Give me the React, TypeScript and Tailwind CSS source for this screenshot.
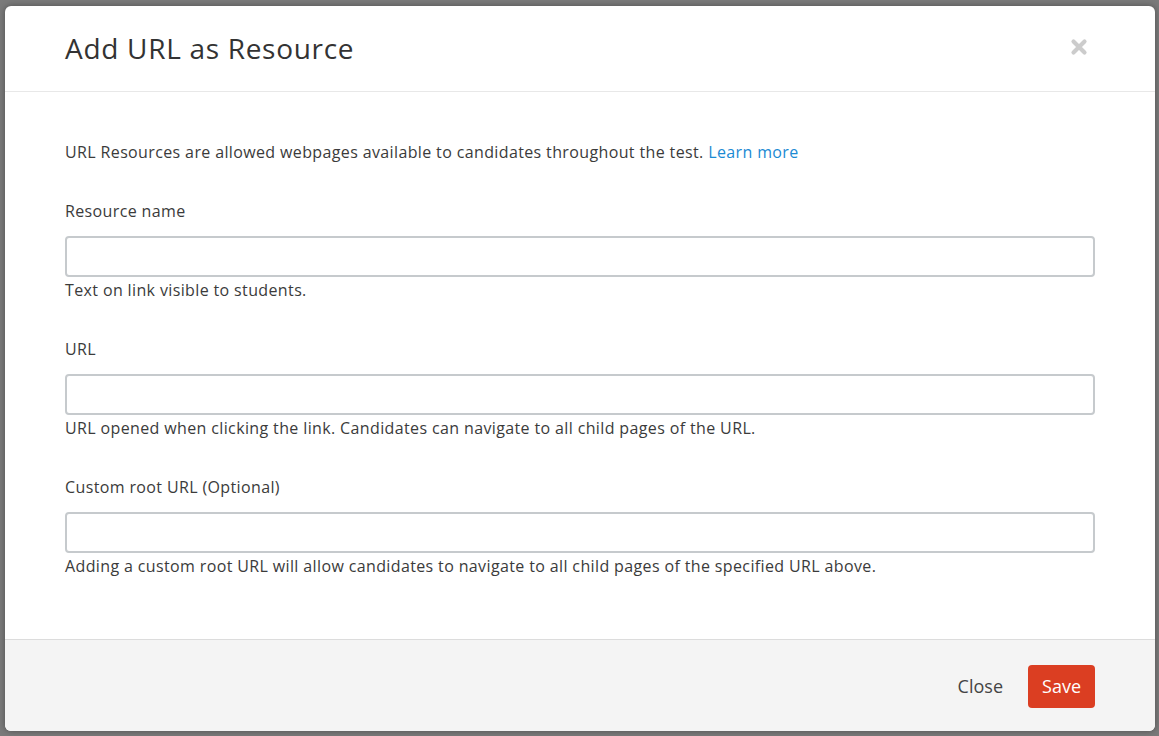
import React from 'react';

const fields = [
  { label: 'Resource name', help: 'Text on link visible to students.' },
  { label: 'URL', help: 'URL opened when clicking the link. Candidates can navigate to all child pages of the URL.' },
  {
    label: 'Custom root URL (Optional)',
    help: 'Adding a custom root URL will allow candidates to navigate to all child pages of the specified URL above.',
  },
];

// bold "times" glyph for the dismiss button
const CloseIcon = () => (
  <svg width="18" height="18" viewBox="0 0 18 18" fill="none">
    <path d="M3.5 3.5 L14.5 14.5 M14.5 3.5 L3.5 14.5" stroke="currentColor" strokeWidth="4.2" strokeLinecap="round" />
  </svg>
);

const App: React.FC = () => {
  return (
    <div
      className="h-[736px] w-full bg-[#7a7a7a] pt-[6px] pb-[5px] pl-[5px] pr-[4px] overflow-hidden"
      style={{ fontFamily: '"Open Sans", "Liberation Sans", sans-serif' }}
    >
      <div className="h-full flex flex-col bg-white rounded-[6px] shadow-[0_0_6px_rgba(0,0,0,0.35)] overflow-hidden text-[#3b3b3b]">
        {/* Header */}
        <div className="h-[86px] shrink-0 flex items-center justify-between pl-[60px] pr-[67px] border-b border-[#e8e8e8]">
          <h2 className="text-[28px] leading-none font-normal tracking-[0.7px] text-[#333] -mt-[2px]">Add URL as Resource</h2>
          <button className="text-[#cccccc] -mt-[4px]">
            <CloseIcon />
          </button>
        </div>

        {/* Body */}
        <div className="flex-1 px-[60px] pt-[48px] text-[16px] leading-[24px] tracking-[0.37px]">
          <p className="mb-[35px]">
            URL Resources are allowed webpages available to candidates throughout the test.{' '}
            <a className="text-[#1b8ad3]" href="#">Learn more</a>
          </p>
          {fields.map((f) => (
            <div key={f.label} className="mb-[35px]">
              <label className="block mb-[13px]">{f.label}</label>
              <input
                type="text"
                className="block w-full h-[41px] rounded-[4px] border-2 border-[#c6cacd] bg-white outline-none"
              />
              <p className="mt-[1px]">{f.help}</p>
            </div>
          ))}
        </div>

        {/* Footer */}
        <div className="h-[92px] shrink-0 bg-[#f4f4f4] border-t border-[#dcdcdc] flex items-center justify-end gap-[25px] pr-[60px] pt-[1px]">
          <button className="text-[18px] text-[#444]">Close</button>
          <button className="h-[43px] px-[14px] rounded-[4px] bg-[#db3e22] text-white text-[18px]">Save</button>
        </div>
      </div>
    </div>
  );
};

export default App;
